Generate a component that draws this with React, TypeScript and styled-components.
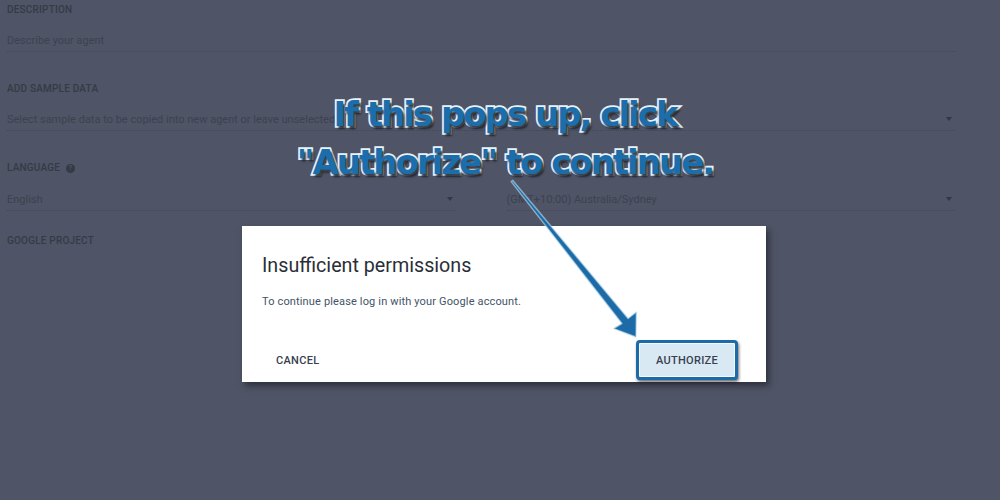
import React from "react";
import styled, { createGlobalStyle } from "styled-components";

const GlobalStyle = createGlobalStyle`
  html, body { margin: 0; padding: 0; }
  body {
    width: 1000px;
    height: 500px;
    overflow: hidden;
    background: #4f5466;
    font-family: Roboto, "Liberation Sans", Arial, sans-serif;
  }
`;

const Page = styled.div`
  position: relative;
  width: 1000px;
  height: 500px;
  background: #4f5466;
  overflow: hidden;
`;

const Form = styled.div`
  display: flex;
  flex-direction: column;
  padding: 3px 45px 0 7px;
  color: #363a47;
`;

const Label = styled.div<{ $mt?: number }>`
  font-size: 10px;
  font-weight: 500;
  letter-spacing: 0.2px;
  text-transform: uppercase;
  color: #363a47;
  line-height: 14px;
  height: 14px;
  margin-top: ${(p) => p.$mt ?? 0}px;
  display: flex;
  align-items: center;
  gap: 6px;
`;

const HelpDot = styled.span`
  width: 9px;
  height: 9px;
  border-radius: 50%;
  background: #363a47;
  color: #4f5466;
  font-size: 7px;
  font-weight: 700;
  display: inline-flex;
  align-items: center;
  justify-content: center;
  line-height: 1;
`;

const Field = styled.div<{ $mt?: number }>`
  display: flex;
  align-items: center;
  justify-content: space-between;
  height: 24px;
  flex: 0 0 24px;
  box-sizing: border-box;
  padding-top: 1px;
  margin-top: ${(p) => p.$mt ?? 0}px;
  border-bottom: 1px dotted #434857;
  font-size: 11px;
  color: #393d4a;
`;

const HalfField = styled(Field)`
  flex: 1 1 0;
  height: 24px;
`;

const Placeholder = styled.span`
  color: #3d4250;
  white-space: nowrap;
  overflow: hidden;
`;

const Caret = styled.span`
  width: 0;
  height: 0;
  border-left: 3px solid transparent;
  border-right: 3px solid transparent;
  border-top: 4px solid #343845;
  margin-right: 3px;
`;

const FieldRow = styled.div`
  display: flex;
  gap: 51px;
  margin-top: 12px;
`;

const Dialog = styled.div`
  position: absolute;
  left: 242px;
  top: 226px;
  width: 524px;
  height: 156px;
  background: #ffffff;
  box-sizing: border-box;
  padding: 28px 28px 1px 20px;
  display: flex;
  flex-direction: column;
  box-shadow: 3px 4px 6px rgba(20, 22, 30, 0.55);
`;

const DialogTitle = styled.div`
  font-size: 19.7px;
  color: #2a2e38;
  line-height: 24px;
  font-weight: 400;
`;

const DialogBody = styled.div`
  margin-top: 17px;
  font-size: 11px;
  letter-spacing: 0.15px;
  color: #3f5468;
  line-height: 14px;
`;

const Actions = styled.div`
  margin-top: auto;
  display: flex;
  justify-content: space-between;
  align-items: center;
`;

const TextButton = styled.button`
  font-family: Roboto, "Liberation Sans", Arial, sans-serif;
  font-size: 11px;
  font-weight: 500;
  letter-spacing: 0.3px;
  color: #3a4050;
  background: transparent;
  border: none;
  padding: 0 14px;
  height: 40px;
`;

const HighlightButton = styled.button`
  font-family: Roboto, "Liberation Sans", Arial, sans-serif;
  font-size: 11px;
  font-weight: 500;
  letter-spacing: 0.3px;
  color: #3a4050;
  width: 102px;
  height: 40px;
  box-sizing: border-box;
  border: 3px solid #1c6aa6;
  border-radius: 4px;
  background: #d8e9f4;
  box-shadow: inset 0 0 0 1px #f2f8fc, 1px 2px 3px rgba(20, 22, 30, 0.6);
  margin-bottom: 1px;
`;

const Callout = styled.div`
  position: absolute;
  left: 0;
  top: 90px;
  width: 1010px;
  text-align: center;
  font-family: "DejaVu Sans", Verdana, sans-serif;
  font-weight: 700;
  font-size: 34px;
  line-height: 48px;
  letter-spacing: -2px;
  color: #1b6dab;
  -webkit-text-stroke: 3.5px #e8f2f8;
  paint-order: stroke fill;
  text-shadow: 2px 3px 2px rgba(25, 28, 38, 0.85);
`;

const ArrowSvg = styled.svg`
  position: absolute;
  left: 0;
  top: 0;
  pointer-events: none;
`;

export default function App() {
  return (
    <Page>
      <GlobalStyle />
      <Form>
        <Label>Description</Label>
        <Field $mt={11}>
          <Placeholder>Describe your agent</Placeholder>
        </Field>
        <Label $mt={30}>Add sample data</Label>
        <Field $mt={11}>
          <Placeholder>Select sample data to be copied into new agent or leave unselected</Placeholder>
          <Caret />
        </Field>
        <Label $mt={30}>
          Language <HelpDot>?</HelpDot>
        </Label>
        <FieldRow>
          <HalfField>
            <Placeholder>English</Placeholder>
            <Caret />
          </HalfField>
          <HalfField>
            <Placeholder>(GMT+10:00) Australia/Sydney</Placeholder>
            <Caret />
          </HalfField>
        </FieldRow>
        <Label $mt={23}>Google project</Label>
      </Form>

      <Dialog>
        <DialogTitle>Insufficient permissions</DialogTitle>
        <DialogBody>To continue please log in with your Google account.</DialogBody>
        <Actions>
          <TextButton>CANCEL</TextButton>
          <HighlightButton>AUTHORIZE</HighlightButton>
        </Actions>
      </Dialog>

      <ArrowSvg width="1000" height="500" viewBox="0 0 1000 500">
        <polygon
          points="511.2,181.6 512.8,180.4 628.1,318.5 636.4,312 636,337 613.7,328.6 621.9,323.5"
          fill="#1c6aa6"
          stroke="#bfe0f0"
          strokeOpacity="0.6"
          strokeWidth="1.5"
          strokeLinejoin="round"
        />
      </ArrowSvg>

      <Callout>
        If this pops up, click
        <br />
        "Authorize" to continue.
      </Callout>
    </Page>
  );
}
